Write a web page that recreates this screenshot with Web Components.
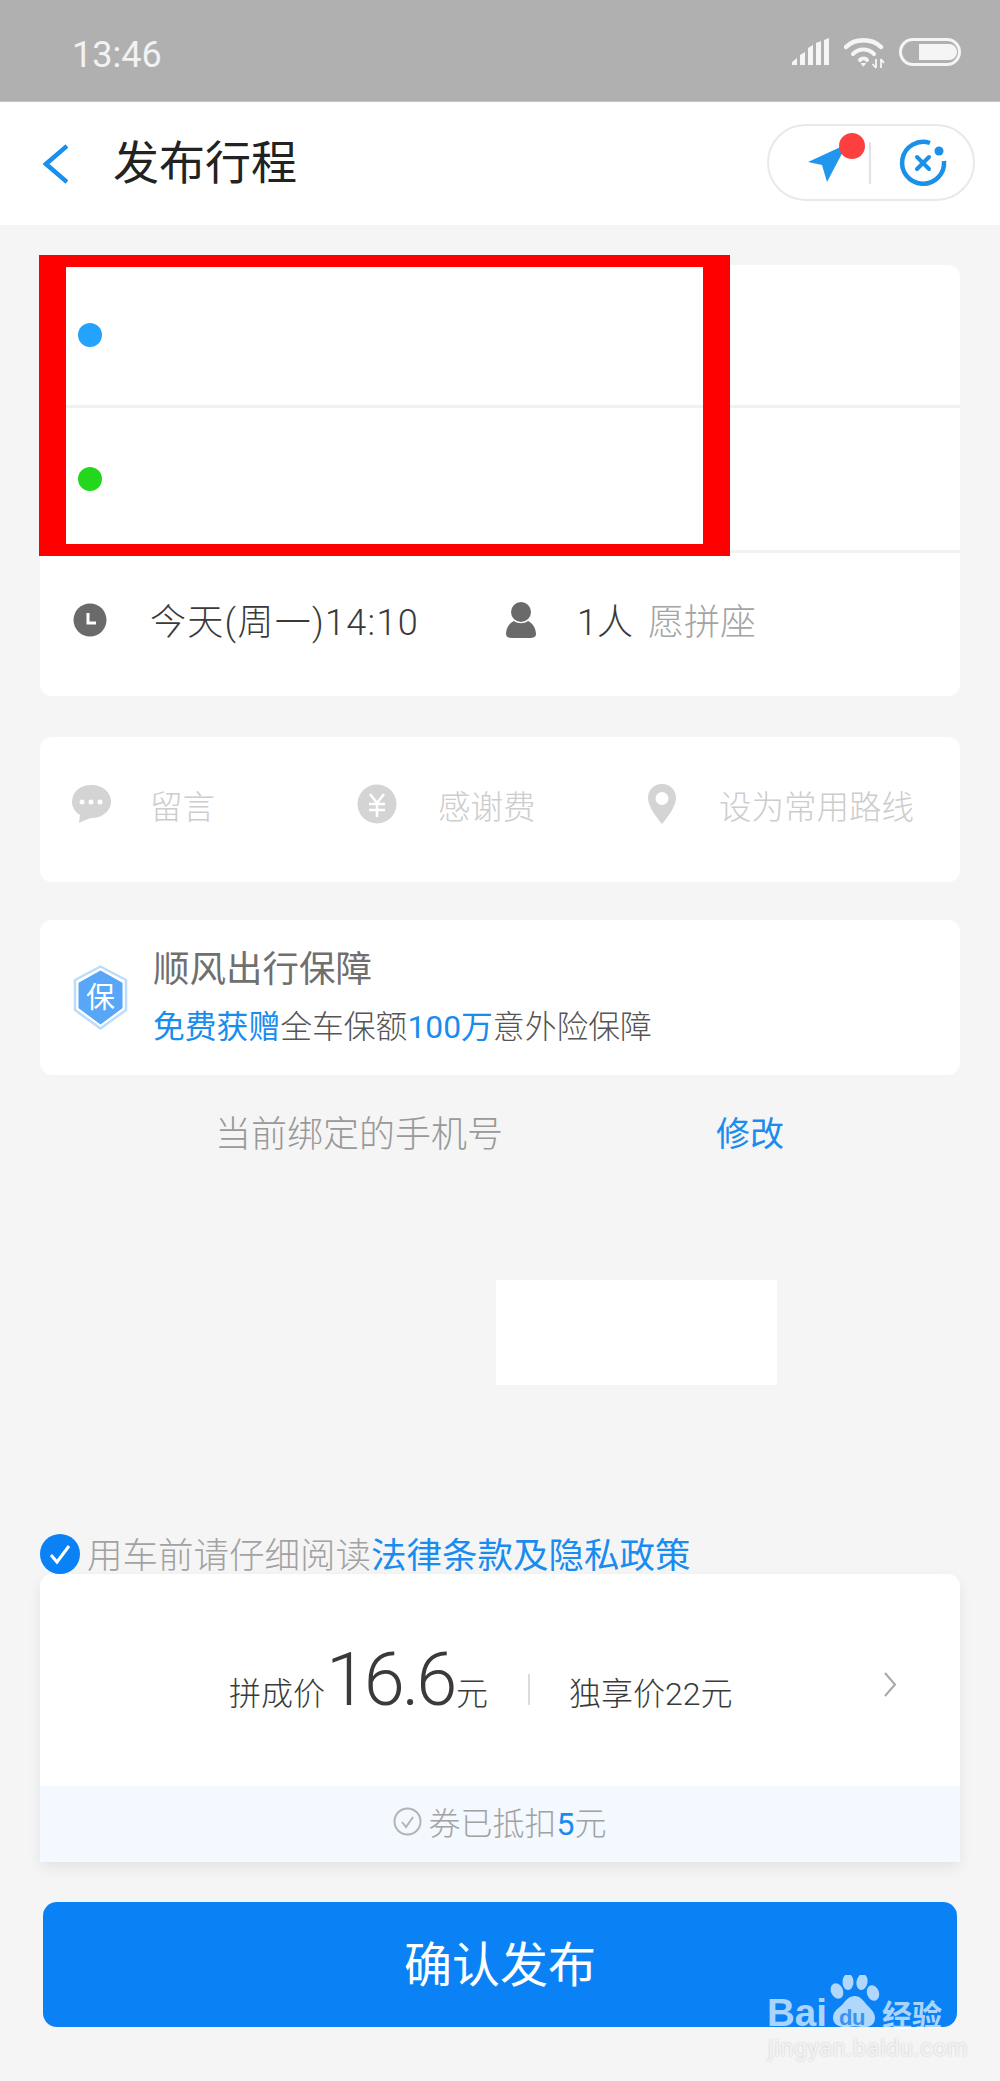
<!DOCTYPE html>
<html lang="zh">
<head>
<meta charset="utf-8">
<title>发布行程</title>
<style>
  html, body { margin: 0; padding: 0; }
  body {
    width: 1000px; height: 2081px; overflow: hidden; position: relative;
    background: #f5f5f5; color: #333; font-weight: 300;
    font-family: Roboto, "Noto Sans CJK SC", sans-serif;
  }
  main { display: flex; flex-direction: column; padding: 40px 40px 0; }
</style>
</head>
<body>
<status-bar></status-bar>
<app-header></app-header>
<main>
  <route-card></route-card>
  <option-card></option-card>
  <insurance-card></insurance-card>
  <phone-note></phone-note>
  <legal-row></legal-row>
  <price-card></price-card>
  <confirm-button>确认发布</confirm-button>
</main>
<mark-box></mark-box>
<baidu-mark></baidu-mark>

<script>
class BaseElement extends HTMLElement {
  constructor() {
    super();
    this.attachShadow({ mode: 'open' });
  }
  connectedCallback() {
    this.shadowRoot.innerHTML = this.render();
  }
}

class StatusBar extends BaseElement {
  render() {
    return `
      <style>
        :host { display: flex; align-items: center; justify-content: space-between; height: 102px; box-sizing: border-box;
          padding: 8px 39px 0 72px; background: #b0b0b0; border-bottom: 1px solid #c4c4c4; color: #f2f2f2; }
        .time { font-size: 36px; font-weight: 400; margin-top: 1px; }
        .icons { display: flex; align-items: center; gap: 14px; margin-top: -6px; }
        svg { display: block; }
      </style>
      <span class="time">13:46</span>
      <div class="icons">
        <svg width="38" height="28" viewBox="0 0 38 28" fill="#f5f5f5">
          <path d="M0 27v-3l5-4v7zM8 27V17l5-3v13zM16 27V10l5-3v20zM24 27V5l5-2v24zM32 27V2l5-2v27z"/>
        </svg>
        <svg width="41" height="32" viewBox="0 0 41 32" fill="none" stroke="#f5f5f5" stroke-linecap="round" style="margin-top:3px">
          <path d="M2 10C11 1 28 1 37 10" stroke-width="4.5"/>
          <path d="M9 17C15 11 24 11 30 17" stroke-width="4"/>
          <path d="M16 23C18 21 21 21 23 23" stroke-width="4"/>
          <path d="M17.500 26.500h4l-2 2.500z" fill="#f5f5f5" stroke-width="1"/>
          <path d="M32 22v9M28.500 27l3.500 4M37 22v9M37 22l3 4" stroke-width="1.800" stroke-linecap="butt"/>
        </svg>
        <svg width="62" height="28" viewBox="0 0 62 28">
          <rect x="1.500" y="1.500" width="59" height="25" rx="12.500" fill="none" stroke="#f5f5f5" stroke-width="3"/>
          <path d="M20 6h30a8 8 0 0 1 0 16H20z" fill="#f5f5f5"/>
        </svg>
      </div>`;
  }
}

class AppHeader extends BaseElement {
  render() {
    return `
      <style>
        :host { display: flex; align-items: center; height: 123px; box-sizing: border-box; padding: 0 25px 0 43px; background: #fff; }
        .back { display: block; margin-right: 45px; }
        h1 { flex: 1; margin: 0 0 9px; font-size: 46px; font-weight: 400; color: #222; }
        .pill { display: block; width: 208px; height: 77px; box-sizing: border-box;
          border: 2px solid #e9e9e9; border-radius: 39px; position: relative; margin-top: -2px; }
        .pill svg { position: absolute; left: -2px; top: -2px; }
      </style>
      <svg class="back" width="25" height="40" viewBox="0 0 25 40" fill="none" stroke="#1a8fee" stroke-width="4.500">
        <path d="M24 2L3 20 24 38"/>
      </svg>
      <h1>发布行程</h1>
      <div class="pill">
        <svg width="208" height="77" viewBox="0 0 208 77">
          <path d="M41 38L80 20 60 58 55 41z" fill="#2196ed"/>
          <circle cx="85" cy="22" r="13" fill="#fd3f3f"/>
          <path d="M103 18v42" stroke="#e2e2e2" stroke-width="2"/>
          <path d="M177 37A21 21 0 1 1 163 19" fill="none" stroke="#1a90e8" stroke-width="4.500"/>
          <circle cx="172" cy="27" r="4.500" fill="#1a90e8"/>
          <path d="M150 33l12 12M162 33l-12 12" stroke="#1a90e8" stroke-width="4" stroke-linecap="round"/>
        </svg>
      </div>`;
  }
}

class RouteCard extends BaseElement {
  render() {
    return `
      <style>
        :host { display: flex; flex-direction: column; background: #fff; border-radius: 12px; overflow: hidden; }
        .stop { display: flex; align-items: center; padding-left: 38px; height: 140px; border-bottom: 3px solid #f1f1f1; }
        .stop + .stop { height: 142px; }
        .dot { width: 24px; height: 24px; border-radius: 50%; background: var(--c); }
        .info { display: flex; align-items: center; height: 131px; padding: 0 0 12px 33px; font-size: 36px; color: #3a3a3a; }
        .when { margin-left: 43px; width: 270px; white-space: nowrap; letter-spacing: 1.300px; }
        .user { margin-left: 86px; }
        .who { margin-left: 41px; }
        .seat { margin-left: 15px; color: #a4a4a4; }
        svg { display: block; }
      </style>
      <div class="stop"><span class="dot" style="--c:#24a3fd"></span></div>
      <div class="stop"><span class="dot" style="--c:#22d71c"></span></div>
      <div class="info">
        <svg width="34" height="34" viewBox="0 0 34 34" style="margin-top:2px">
          <circle cx="17" cy="17" r="16.500" fill="#6a6a6a"/>
          <path d="M15 10v10h8" fill="none" stroke="#fff" stroke-width="3"/>
        </svg>
        <span class="when">今天(周一)14:10</span>
        <svg class="user" width="30" height="36" viewBox="0 0 30 36" fill="#6a6a6a" style="margin-top:2px">
          <circle cx="15" cy="10" r="10"/>
          <path d="M8 19c4 3 10 3 14 0 5 2 8 8 8 13 0 3-3 4-6 4H6c-3 0-6-1-6-4 0-5 3-11 8-13z"/>
        </svg>
        <span class="who">1人</span>
        <span class="seat">愿拼座</span>
      </div>`;
  }
}

class OptionCard extends BaseElement {
  render() {
    return `
      <style>
        :host { display: grid; grid-template-columns: 286px 290px 1fr; align-items: center; height: 145px; margin-top: 41px;
          padding: 0 0 11px 31px; background: #fff; border-radius: 12px; font-size: 32.500px; color: #cdcdcd; box-sizing: border-box; }
        div { display: flex; align-items: center; white-space: nowrap; }
        svg { display: block; flex: none; }
        .a { margin-left: 39px; }
        .b { margin-left: 41px; }
        .c { margin-left: 42px; }
      </style>
      <div>
        <svg width="40" height="40" viewBox="0 0 40 40">
          <path d="M20 1a19 16.500 0 0 1 2 33c-4 0-8 2-14 5l1-8C4 28 1 23 1 18 1 8 9 1 20 1z" fill="#d4d4d4"/>
          <circle cx="11" cy="18" r="2.500" fill="#fff"/><circle cx="20" cy="18" r="2.500" fill="#fff"/><circle cx="29" cy="18" r="2.500" fill="#fff"/>
        </svg>
        <span class="a">留言</span>
      </div>
      <div>
        <svg width="40" height="40" viewBox="0 0 40 40">
          <circle cx="20" cy="20" r="19.500" fill="#d4d4d4"/>
          <path d="M13 10l7 9 7-9M12 20h16M12 26h16M20 19v14" fill="none" stroke="#fff" stroke-width="2.500"/>
        </svg>
        <span class="b">感谢费</span>
      </div>
      <div>
        <svg width="30" height="40" viewBox="0 0 30 40">
          <path fill-rule="evenodd" d="M15 0c8 0 14 6 14 14 0 8-8 19-14 26C9 33 1 22 1 14 1 6 7 0 15 0zm0 8a6.500 6.500 0 1 0 0 13 6.500 6.500 0 0 0 0-13z" fill="#d4d4d4"/>
        </svg>
        <span class="c">设为常用路线</span>
      </div>`;
  }
}

class InsuranceCard extends BaseElement {
  render() {
    return `
      <style>
        :host { display: flex; align-items: center; height: 155px; margin-top: 38px; padding-left: 33px; box-sizing: border-box;
          background: #fff; border-radius: 12px; }
        svg { display: block; flex: none; }
        .t { margin-left: 25px; }
        .t1 { font-size: 36.500px; line-height: 50px; color: #6f6f6f; font-weight: 400; }
        .t2 { font-size: 31.800px; line-height: 46px; margin-top: 9px; color: #555; white-space: nowrap; }
        b { font-weight: 400; color: #1a8cf0; }
      </style>
      <svg width="55" height="65" viewBox="0 0 55 65" stroke-linejoin="round">
        <path d="M27.500 1.500L53 15v30L27.500 63.500 2 45V15z" fill="#fff" stroke="#bcdcfb" stroke-width="2.500"/>
        <path d="M27.500 6L49 18v25L27.500 59 6 43V18z" fill="#57a6f7" stroke="#57a6f7" stroke-width="1"/>
        <text x="27.500" y="43" text-anchor="middle" font-size="29" font-weight="400" fill="#fff" font-family="Noto Sans CJK SC">保</text>
      </svg>
      <div class="t">
        <div class="t1">顺风出行保障</div>
        <div class="t2"><b>免费获赠</b>全车保额<b>100万</b>意外险保障</div>
      </div>`;
  }
}

class PhoneNote extends BaseElement {
  render() {
    return `
      <style>
        :host { display: block; height: 459px; }
        .line { display: flex; align-items: center; height: 112px; padding-left: 175px; }
        .num { width: 288px; white-space: nowrap; font-size: 36px; color: #999; }
        .edit { margin-left: 213px; font-size: 34px; color: #1a8cf0; font-weight: 400; }
        .blank { width: 281px; height: 105px; margin: 93px 0 0 456px; background: #fff; }
      </style>
      <div class="line">
        <span class="num">当前绑定的手机号</span>
        <span class="edit">修改</span>
      </div>
      <div class="blank"></div>`;
  }
}

class LegalRow extends BaseElement {
  render() {
    return `
      <style>
        :host { display: flex; align-items: center; height: 40px; font-size: 35.500px; color: #a2a2a2; white-space: nowrap; }
        svg { display: block; margin-right: 7px; flex: none; }
        span { margin-top: -4px; }
        b { font-weight: 400; color: #1a8cf0; }
      </style>
      <svg width="40" height="40" viewBox="0 0 40 40">
        <circle cx="20" cy="20" r="20" fill="#0a82f5"/>
        <path d="M11 21l6 7 12-16" fill="none" stroke="#fff" stroke-width="3"/>
      </svg>
      <span>用车前请仔细阅读<b>法律条款及隐私政策</b></span>`;
  }
}

class PriceCard extends BaseElement {
  render() {
    return `
      <style>
        :host { display: flex; flex-direction: column; background: #fff; border-radius: 12px 12px 0 0; position: relative;
          box-shadow: 0 6px 14px rgba(0, 0, 0, .07); color: #3a3a3a; }
        .top { display: flex; align-items: baseline; height: 212px; box-sizing: border-box; padding: 69px 0 0 189px; font-size: 32px; white-space: nowrap; }
        .big { font-size: 74px; line-height: 74px; margin: 0 2px 0 1px; font-weight: 300; letter-spacing: -3.200px; }
        .sep { width: 2px; height: 31px; background: #dcdcdc; margin: 0 39px 0 40px; align-self: baseline; }
        .go { position: absolute; left: 843px; top: 98px; display: block; }
        .coupon { display: flex; align-items: center; justify-content: center; height: 76px; box-sizing: border-box; padding-bottom: 6px;
          background: #f3f9fe; font-size: 32px; color: #a2a2a2; }
        .coupon svg { margin-right: 6px; display: block; }
        b { font-weight: 400; color: #1a8cf0; }
      </style>
      <div class="top">
        <span>拼成价</span><span class="big">16.6</span><span>元</span>
        <span class="sep"></span>
        <span>独享价22元</span>
      </div>
      <svg class="go" width="14" height="25" viewBox="0 0 14 25" fill="none" stroke="#a8a8a8" stroke-width="2">
        <path d="M2 1l10 11.500L2 24"/>
      </svg>
      <div class="coupon">
        <svg width="29" height="29" viewBox="0 0 29 29" fill="none" stroke="#b4b4b4" stroke-width="2">
          <circle cx="14.500" cy="14.500" r="13"/>
          <path d="M9 15l4 5 7-10"/>
        </svg>
        <span>券已抵扣<b>5</b>元</span>
      </div>`;
  }
}

class ConfirmButton extends BaseElement {
  render() {
    return `
      <style>
        :host { display: flex; align-items: center; justify-content: center; height: 125px; box-sizing: border-box; padding-bottom: 7px; margin: 40px 3px 0 3px;
          background: #0a82f5; border-radius: 14px; color: #fff; font-size: 48px; font-weight: 400; }
      </style>
      <slot></slot>`;
  }
}

class MarkBox extends BaseElement {
  render() {
    return `
      <style>
        :host { position: absolute; left: 39px; top: 255px; width: 691px; height: 301px; box-sizing: border-box;
          border: solid #ff0000; border-width: 12px 27px; }
      </style>`;
  }
}

class BaiduMark extends BaseElement {
  render() {
    return `
      <style>
        :host { position: absolute; left: 766px; top: 1975px; width: 190px; height: 84px; color: rgba(255, 255, 255, .68); }
        .bai { position: absolute; left: 1px; top: 14px; font: 700 38.500px/48px "Liberation Sans", sans-serif; }
        .jy { position: absolute; left: 116px; top: 18px; font: 700 30px/40px "Noto Sans CJK SC", sans-serif; }
        .url { position: absolute; left: 2px; top: 59px; font: 400 23.500px/28px Roboto, sans-serif; letter-spacing: .55px; color: rgba(255, 255, 255, .75); white-space: nowrap; text-shadow: 0 0 2px rgba(0, 0, 0, .22); }
        svg { position: absolute; left: 62px; top: 0; }
        .du { position: absolute; left: 73px; top: 29px; font: 700 22px/28px "Liberation Sans", sans-serif; color: #3a93ee; letter-spacing: -.5px; }
      </style>
      <span class="bai">Bai</span>
      <svg width="54" height="58" viewBox="0 0 54 58" fill="currentColor">
        <ellipse cx="9" cy="16" rx="6" ry="8" transform="rotate(-25 9 16)"/>
        <ellipse cx="20" cy="7" rx="5.500" ry="8"/>
        <ellipse cx="34" cy="7" rx="5.500" ry="8" transform="rotate(10 34 7)"/>
        <ellipse cx="45" cy="18" rx="6" ry="8" transform="rotate(-20 45 18)"/>
        <path d="M27 21c5 0 8 4 12 9 5 5 8 8 8 13 0 8-8 10-14 9-4-1-8-1-12 0-6 1-16-1-16-9 0-6 4-9 9-13 4-5 7-9 13-9z"/>
      </svg>
      <span class="du">du</span>
      <span class="jy">经验</span>
      <span class="url">jingyan.baidu.com</span>`;
  }
}

customElements.define('status-bar', StatusBar);
customElements.define('app-header', AppHeader);
customElements.define('route-card', RouteCard);
customElements.define('option-card', OptionCard);
customElements.define('insurance-card', InsuranceCard);
customElements.define('phone-note', PhoneNote);
customElements.define('legal-row', LegalRow);
customElements.define('price-card', PriceCard);
customElements.define('confirm-button', ConfirmButton);
customElements.define('mark-box', MarkBox);
customElements.define('baidu-mark', BaiduMark);
</script>
</body>
</html>
